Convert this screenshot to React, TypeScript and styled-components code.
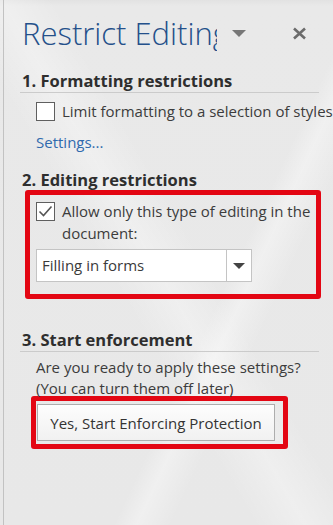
import React from "react";
import styled, { createGlobalStyle } from "styled-components";

const Global = createGlobalStyle`
  html, body { margin: 0; padding: 0; }
  body { background: #e7e7e7; }
  * { box-sizing: border-box; }
`;

const Pane = styled.div`
  width: 333px;
  height: 525px;
  overflow: hidden;
  padding-left: 3px;
  background:
    linear-gradient(115deg, transparent 0 62%, rgba(255,255,255,0.35) 66%, transparent 72%),
    linear-gradient(60deg, transparent 0 40%, rgba(255,255,255,0.3) 48%, transparent 56%),
    linear-gradient(180deg, #e2e2e2 0, #e9e9e9 6px, #e8e8e8 100%);
  font-family: "Open Sans", "Noto Sans", sans-serif;
  color: #3c3c3c;
`;

const Inner = styled.div`
  height: 100%;
  border-left: 1px solid #c2c2c2;
  padding-top: 15px;
`;

const Header = styled.div`
  display: flex;
  align-items: center;
  height: 36px;
  padding-left: 18px;
`;

const Title = styled.div`
  width: 195px;
  overflow: hidden;
  white-space: nowrap;
  font-size: 31px;
  font-weight: 300;
  line-height: 36px;
  color: #24508a;
`;

const MenuArrow = styled.div`
  margin-left: 15px;
  width: 0;
  height: 0;
  border-left: 7px solid transparent;
  border-right: 7px solid transparent;
  border-top: 7px solid #777;
`;

const Close = styled.div`
  margin-left: 46px;
  display: flex;
  align-items: center;
`;

const SectionTitle = styled.div<{ $rule?: boolean; $top: number }>`
  margin: ${(p) => p.$top}px 14px 0 16px;
  padding-left: 2px;
  height: 22px;
  font-size: 16.5px;
  font-weight: 700;
  line-height: 22px;
  color: #2e2e2e;
  border-bottom: 1px solid ${(p) => (p.$rule ? "#cbcbcb" : "transparent")};
  box-sizing: content-box;
`;

const CheckRow = styled.div<{ $top: number }>`
  display: flex;
  align-items: flex-start;
  gap: 7px;
  margin: ${(p) => p.$top}px 0 0 32px;
`;

const Box = styled.div`
  flex: none;
  width: 19px;
  height: 19px;
  margin-top: 2px;
  background: #fff;
  border: 1px solid #5f5f5f;
  display: flex;
  align-items: center;
  justify-content: center;
`;

const Label = styled.div`
  font-size: 15px;
  line-height: 22px;
  color: #3c3c3c;
  white-space: nowrap;
`;

const Link = styled.div`
  margin: 9px 0 0 32px;
  font-size: 15px;
  line-height: 22px;
  color: #2f6aae;
`;

const Highlight = styled.div<{ $left: number; $top: number; $width: number }>`
  margin: ${(p) => p.$top}px 0 0 ${(p) => p.$left}px;
  width: ${(p) => p.$width}px;
  border: 5px solid #e30613;
  border-radius: 3px;
`;

const EditBox = styled.div`
  padding: 5px 0 12px 6px;
  & > ${CheckRow} { margin: 0; }
`;

const Select = styled.div`
  margin-top: 5px;
  width: 216px;
  height: 33px;
  display: flex;
  background: #fff;
  border: 1px solid #c4c4c4;
`;

const SelectText = styled.div`
  flex: 1;
  padding-left: 5px;
  font-size: 15px;
  line-height: 31px;
  color: #3a3a3a;
`;

const SelectButton = styled.div`
  width: 25px;
  border-left: 1px solid #c4c4c4;
  display: flex;
  align-items: center;
  justify-content: center;
  &::after {
    content: "";
    border-left: 6px solid transparent;
    border-right: 6px solid transparent;
    border-top: 6px solid #444;
  }
`;

const Para = styled.div`
  margin: 5px 0 0 32px;
  font-size: 15px;
  line-height: 21px;
  color: #3c3c3c;
`;

const ButtonWrap = styled.div`
  padding: 3px 8px 3px 1px;
`;

const Button = styled.div`
  height: 37px;
  display: flex;
  align-items: center;
  justify-content: center;
  font-size: 15px;
  color: #333;
  background: linear-gradient(180deg, #fdfdfd, #f1f1f1);
  border: 1px solid #adadad;
`;

export default function App() {
  return (
    <Pane>
      <Global />
      <Inner>
        <Header>
          <Title>Restrict Editing</Title>
          <MenuArrow />
          <Close>
            <svg width="15" height="13" viewBox="0 0 15 13">
              <path d="M2 1.5 L13 11.5 M13 1.5 L2 11.5" stroke="#6b6b6b" strokeWidth="2.6" />
            </svg>
          </Close>
        </Header>

        <SectionTitle $rule $top={19}>1. Formatting restrictions</SectionTitle>
        <CheckRow $top={7}>
          <Box />
          <Label>Limit formatting to a selection of styles</Label>
        </CheckRow>
        <Link>Settings...</Link>

        <SectionTitle $top={16}>2. Editing restrictions</SectionTitle>
        <Highlight $left={21} $top={-2} $width={296}>
          <EditBox>
            <CheckRow $top={0}>
              <Box>
                <svg width="15" height="13" viewBox="0 0 15 13">
                  <path d="M1.5 6.5 L5.5 10.5 L13.5 1.5" stroke="#555" strokeWidth="1.6" fill="none" />
                </svg>
              </Box>
              <Label>
                Allow only this type of editing in the
                <br />
                document:
              </Label>
            </CheckRow>
            <Select>
              <SelectText>Filling in forms</SelectText>
              <SelectButton />
            </Select>
          </EditBox>
        </Highlight>

        <SectionTitle $rule $top={30}>3. Start enforcement</SectionTitle>
        <Para>
          Are you ready to apply these settings?
          <br />
          (You can turn them off later)
        </Para>
        <Highlight $left={27} $top={-3} $width={257}>
          <ButtonWrap>
            <Button>Yes, Start Enforcing Protection</Button>
          </ButtonWrap>
        </Highlight>
      </Inner>
    </Pane>
  );
}
